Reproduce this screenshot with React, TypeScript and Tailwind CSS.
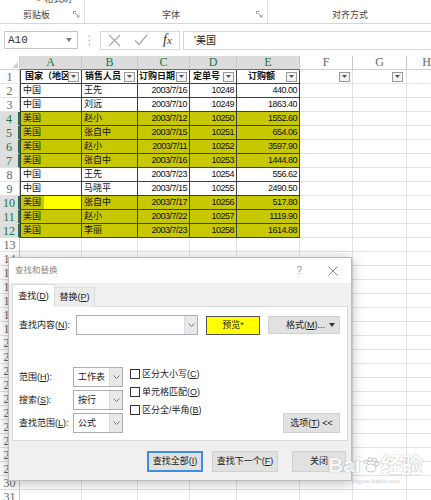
import React from 'react';

type Row = { country: string; person: string; date: string; id: string; amount: string; hl: boolean };

const ROWS: Row[] = [
  { country: '中国', person: '王先', date: '2003/7/16', id: '10248', amount: '440.00', hl: false },
  { country: '中国', person: '刘远', date: '2003/7/10', id: '10249', amount: '1863.40', hl: false },
  { country: '美国', person: '赵小', date: '2003/7/12', id: '10250', amount: '1552.60', hl: true },
  { country: '美国', person: '张自中', date: '2003/7/15', id: '10251', amount: '654.06', hl: true },
  { country: '美国', person: '赵小', date: '2003/7/11', id: '10252', amount: '3597.90', hl: true },
  { country: '美国', person: '张自中', date: '2003/7/16', id: '10253', amount: '1444.80', hl: true },
  { country: '中国', person: '王先', date: '2003/7/23', id: '10254', amount: '556.62', hl: false },
  { country: '中国', person: '马晓平', date: '2003/7/15', id: '10255', amount: '2490.50', hl: false },
  { country: '美国', person: '张自中', date: '2003/7/17', id: '10256', amount: '517.80', hl: true },
  { country: '美国', person: '赵小', date: '2003/7/22', id: '10257', amount: '1119.90', hl: true },
  { country: '美国', person: '李丽', date: '2003/7/23', id: '10258', amount: '1614.88', hl: true },
];

const COLS = [
  { key: 'A', w: 'w-[62px]', sel: true },
  { key: 'B', w: 'w-[56px]', sel: true },
  { key: 'C', w: 'w-[52px]', sel: true },
  { key: 'D', w: 'w-[47px]', sel: true },
  { key: 'E', w: 'w-[63px]', sel: true },
  { key: 'F', w: 'w-[53px]', sel: false },
  { key: 'G', w: 'w-[54px]', sel: false },
  { key: 'H', w: 'w-[40px]', sel: false },
];

const TABLE_CELL = 'shrink-0 overflow-hidden whitespace-nowrap border-r border-b border-[#3f3f3f]';
const PLAIN_CELL = 'shrink-0 border-r border-b border-[#e2e2e2]';

function Launcher() {
  return (
    <svg width="7" height="7" viewBox="0 0 7 7" className="mb-[2px]">
      <path d="M0.5 3V0.5H3" fill="none" stroke="#999" />
      <path d="M2 2L6 6M6 3.5V6H3.5" fill="none" stroke="#999" />
    </svg>
  );
}

function Ribbon() {
  return (
    <div className="flex h-[24px] border-b border-[#d6d6d6] text-[9px] leading-[10px] text-[#444]">
      <div className="flex w-[85px] shrink-0 flex-col border-r border-[#e1e1e1]">
        <div className="flex h-[4px] items-end overflow-hidden pl-[36px]">
          <span className="mr-[3px] text-[#d8a23a]">●</span>
          <span>格式刷</span>
        </div>
        <div className="flex flex-1 items-end pb-[3px] pl-[23px] pr-[4px]">
          <span>剪贴板</span>
          <span className="ml-auto"><Launcher /></span>
        </div>
      </div>
      <div className="flex w-[183px] shrink-0 items-end border-r border-[#e1e1e1] pb-[3px] pl-[77px] pr-[4px]">
        <span>字体</span>
        <span className="ml-auto"><Launcher /></span>
      </div>
      <div className="flex flex-1 items-end pb-[3px] pl-[64px]">
        <span>对齐方式</span>
      </div>
    </div>
  );
}

function FormulaBar() {
  return (
    <div className="flex h-[32px] items-center pl-[4px]">
      <div className="flex h-[18px] w-[74px] shrink-0 items-center border border-[#c6c6c6] pl-[3px] pr-[5px] font-['Liberation_Mono',monospace] text-[11px] text-[#333]">
        A10
        <svg className="ml-auto" width="6" height="4" viewBox="0 0 6 4">
          <path d="M0 0h6L3 4z" fill="#777" />
        </svg>
      </div>
      <div className="flex w-[22px] shrink-0 justify-center">
        <svg width="3" height="11" viewBox="0 0 3 11">
          <circle cx="1.5" cy="1.5" r="1" fill="#c4c4c4" />
          <circle cx="1.5" cy="5.5" r="1" fill="#c4c4c4" />
          <circle cx="1.5" cy="9.5" r="1" fill="#c4c4c4" />
        </svg>
      </div>
      <div className="flex h-[19px] w-[80px] shrink-0 items-center border border-[#d8d8d8] pl-[7px]">
        <svg width="13" height="13" viewBox="0 0 13 13">
          <path d="M1 1L12 12M12 1L1 12" stroke="#a8a8a8" strokeWidth="1.2" />
        </svg>
        <svg className="ml-[13px]" width="14" height="12" viewBox="0 0 14 12">
          <path d="M1 6.5L5 10.5L13 1" fill="none" stroke="#a8a8a8" strokeWidth="1.2" />
        </svg>
        <span className="ml-[15px] font-['Liberation_Serif',serif] text-[14px] italic leading-[14px] text-[#333]">
          f<span className="text-[11px]">x</span>
        </span>
      </div>
      <div className="ml-[3px] flex h-[19px] flex-1 items-center border border-r-0 border-[#d8d8d8] pl-[10px] text-[10px] text-[#222]">
        '美国
      </div>
    </div>
  );
}

function FilterBtn({ extra = '' }: { extra?: string }) {
  return (
    <span className={`ml-auto flex h-[10px] w-[11px] shrink-0 items-center justify-center border border-[#9a9a9a] bg-[#f2f2f2] ${extra}`}>
      <svg width="5" height="3" viewBox="0 0 5 3">
        <path d="M0 0h5L2.5 3z" fill="#555" />
      </svg>
    </span>
  );
}

function RowHead({ n, active }: { n: number; active: boolean }) {
  return (
    <div
      className={`w-[20px] shrink-0 border-b border-b-[#e2e2e2] text-center font-['Liberation_Serif',serif] text-[12px] leading-[14px] ${
        active ? 'border-r-2 border-r-[#217346] bg-[#dedede] text-[#217346]' : 'border-r border-r-[#c8c8c8] bg-white text-[#666]'
      }`}
    >
      {n}
    </div>
  );
}

function ColumnHeader() {
  return (
    <div className="flex h-[14px] font-['Liberation_Serif',serif] text-[12px] leading-[13px]">
      <div className="flex w-[20px] shrink-0 items-end justify-end border-r border-b border-[#d0d0d0] p-[1px]">
        <svg width="6" height="6" viewBox="0 0 6 6">
          <path d="M6 0V6H0z" fill="#cfcfcf" />
        </svg>
      </div>
      {COLS.map((c) => (
        <div
          key={c.key}
          className={`${c.w} shrink-0 border-r border-r-[#c8c8c8] border-b text-center ${
            c.sel ? 'border-b-[#6e6e6e] bg-[#dcdcdc] text-[#217346]' : 'border-b-[#d0d0d0] bg-white text-[#666]'
          }`}
        >
          {c.key}
        </div>
      ))}
    </div>
  );
}

function TitleRow() {
  const titles = ['国家（地区）', '销售人员', '订购日期', '定单号', '订购额'];
  return (
    <div className="flex h-[14px] text-[9px] leading-[13px] text-[#111]">
      <RowHead n={1} active={false} />
      {COLS.slice(0, 5).map((c, i) => (
        <div key={c.key} className={`${c.w} ${TABLE_CELL} flex items-center bg-white ${i === 0 ? 'border-l' : ''}`}>
          <span className={`min-w-0 flex-1 overflow-hidden font-bold ${i === 0 ? 'pl-[4px]' : 'text-center'}`}>{titles[i]}</span>
          <FilterBtn extra="mr-[2px]" />
        </div>
      ))}
      <div className={`w-[53px] ${PLAIN_CELL} flex items-center`}>
        <FilterBtn extra="mr-[2px]" />
      </div>
      <div className={`w-[54px] ${PLAIN_CELL} flex items-center`}>
        <FilterBtn extra="mr-[3px]" />
      </div>
      <div className={`w-[40px] ${PLAIN_CELL}`} />
    </div>
  );
}

function DataRow({ n, row }: { n: number; row: Row }) {
  const fill = row.hl ? 'bg-[#c8c800]' : 'bg-white';
  const num = "font-['Liberation_Sans',sans-serif] tracking-[-0.5px] text-right pr-[2px]";
  return (
    <div className="flex h-[14px] text-[9px] leading-[13px] text-[#111]">
      <RowHead n={n} active={row.hl} />
      {n === 10 ? (
        <div className={`w-[62px] ${TABLE_CELL} flex border-l bg-[#ffff00]`}>
          <span className="w-[23px] bg-[#c8c800] pl-[2px]">{row.country}</span>
        </div>
      ) : (
        <div className={`w-[62px] ${TABLE_CELL} border-l pl-[2px] ${fill}`}>{row.country}</div>
      )}
      <div className={`w-[56px] ${TABLE_CELL} pl-[2px] ${fill}`}>{row.person}</div>
      <div className={`w-[52px] ${TABLE_CELL} ${num} ${fill}`}>{row.date}</div>
      <div className={`w-[47px] ${TABLE_CELL} ${num} ${fill}`}>{row.id}</div>
      <div className={`w-[63px] ${TABLE_CELL} ${num} ${fill}`}>{row.amount}</div>
      <div className={`w-[53px] ${PLAIN_CELL}`} />
      <div className={`w-[54px] ${PLAIN_CELL}`} />
      <div className={`w-[40px] ${PLAIN_CELL}`} />
    </div>
  );
}

function EmptyRow({ n }: { n: number }) {
  return (
    <div className="flex h-[14px]">
      <RowHead n={n} active={false} />
      {COLS.map((c) => (
        <div key={c.key} className={`${c.w} ${PLAIN_CELL}`} />
      ))}
    </div>
  );
}

function Sheet() {
  const empties = Array.from({ length: 19 }, (_, i) => i + 13);
  return (
    <div className="flex flex-col">
      <ColumnHeader />
      <TitleRow />
      {ROWS.map((r, i) => (
        <DataRow key={i} n={i + 2} row={r} />
      ))}
      {empties.map((n) => (
        <EmptyRow key={n} n={n} />
      ))}
    </div>
  );
}

function Combo({ w, value }: { w: string; value?: string }) {
  return (
    <div className={`flex h-[20px] ${w} shrink-0 border border-[#abadb3] bg-white`}>
      <span className="flex-1 pl-[4px] leading-[18px]">{value}</span>
      <span className="flex w-[13px] items-center justify-center border-l border-[#d9d9d9] bg-[#e8e8e8]">
        <svg width="7" height="4" viewBox="0 0 7 4">
          <path d="M0.5 0.5L3.5 3.5L6.5 0.5" fill="none" stroke="#777" />
        </svg>
      </span>
    </div>
  );
}

function Check({ children }: { children: React.ReactNode }) {
  return (
    <div className="flex h-[18px] items-center gap-[2px]">
      <span className="h-[10px] w-[10px] border border-[#333] bg-white" />
      <span>{children}</span>
    </div>
  );
}

function FindDialog() {
  const options = [
    { label: <>范围(<u>H</u>):</>, value: '工作表' },
    { label: <>搜索(<u>S</u>):</>, value: '按行' },
    { label: <>查找范围(<u>L</u>):</>, value: '公式' },
  ];
  return (
    <div className="absolute left-[8px] top-[257px] flex h-[224px] w-[344px] flex-col border border-[#bdbdbd] bg-[#f0f0f0] text-[9px] leading-[11px] text-[#222] shadow-[0_2px_12px_rgba(0,0,0,0.28)]">
      <div className="flex h-[25px] shrink-0 items-center bg-white pl-[6px] pr-[13px]">
        <span className="text-[8.5px] text-[#8a8a8a]">查找和替换</span>
        <span className="ml-auto text-[10px] text-[#9a9a9a]">?</span>
        <svg className="ml-[26px]" width="10" height="10" viewBox="0 0 10 10">
          <path d="M0.5 0.5L9.5 9.5M9.5 0.5L0.5 9.5" stroke="#888" />
        </svg>
      </div>

      <div className="px-[3px]">
        <div className="flex h-[24px] items-end">
          <div className="relative z-10 flex h-[23px] w-[43px] items-center justify-center border border-b-0 border-[#d9d9d9] bg-white">
            查找(<u>D</u>)
          </div>
          <div className="flex h-[20px] w-[40px] items-center justify-center border-t border-r border-[#dcdcdc] bg-[#ececec]">
            替换(<u>P</u>)
          </div>
        </div>

        <div className="-mt-px flex h-[135px] flex-col border border-[#d9d9d9] bg-white pl-[6px] pt-[8px]">
          <div className="flex h-[20px] items-center">
            <span className="w-[57px] shrink-0">查找内容(<u>N</u>):</span>
            <Combo w="w-[122px]" />
            <div className="ml-[8px] flex h-[19px] w-[54px] items-center justify-center border border-[#555] bg-[#ffff00]">
              预览*
            </div>
            <div className="ml-[8px] flex h-[18px] w-[72px] items-center border border-[#d0d0d0] bg-[#e1e1e1] pl-[17px] pr-[4px]">
              格式(<u>M</u>)...
              <svg className="ml-auto" width="6" height="4" viewBox="0 0 6 4">
                <path d="M0 0h6L3 4z" fill="#333" />
              </svg>
            </div>
          </div>

          <div className="mt-[32px] flex">
            <div className="flex flex-col gap-[3px]">
              {options.map((o, i) => (
                <div key={i} className="flex h-[20px] items-center">
                  <span className="w-[54px] shrink-0">{o.label}</span>
                  <Combo w="w-[50px]" value={o.value} />
                </div>
              ))}
            </div>
            <div className="-mt-[2px] ml-[7px] flex flex-col">
              <Check>区分大小写(<u>C</u>)</Check>
              <Check>单元格匹配(<u>O</u>)</Check>
              <Check>区分全/半角(<u>B</u>)</Check>
            </div>
            <div className="ml-auto mr-[7px] flex h-[20px] w-[57px] items-center justify-center self-end border border-[#d0d0d0] bg-[#e1e1e1]">
              选项(<u>T</u>) &lt;&lt;
            </div>
          </div>
        </div>
      </div>

      <div className="mt-[10px] flex h-[21px] justify-end pr-[5px]">
        <div className="flex w-[56px] items-center justify-center border-2 border-[#3c8fd8] bg-[#e1e1e1]">
          查找全部(<u>I</u>)
        </div>
        <div className="ml-[9px] flex w-[66px] items-center justify-center border border-[#d0d0d0] bg-[#e1e1e1]">
          查找下一个(<u>F</u>)
        </div>
        <div className="ml-[14px] flex w-[54px] items-center justify-center border border-[#d0d0d0] bg-[#e1e1e1]">
          关闭
        </div>
      </div>
    </div>
  );
}

function Watermark() {
  return (
    <div className="pointer-events-none absolute left-[328px] top-[453px] flex flex-col items-center opacity-70">
      <div className="flex items-center text-[21px] font-bold leading-[24px] text-white [text-shadow:0_0_1px_#9a9a9a,0_0_1px_#9a9a9a]">
        Bai
        <svg className="mx-[1px]" width="18" height="18" viewBox="0 0 18 18">
          <ellipse cx="9" cy="12" rx="5" ry="4" fill="#fff" stroke="#aaa" />
          <circle cx="4" cy="6" r="2" fill="#fff" stroke="#aaa" />
          <circle cx="8" cy="3.5" r="2" fill="#fff" stroke="#aaa" />
          <circle cx="12.5" cy="4" r="2" fill="#fff" stroke="#aaa" />
          <circle cx="15" cy="8" r="2" fill="#fff" stroke="#aaa" />
        </svg>
        经验
      </div>
      <div className="text-[6px] leading-[8px] text-[#bbb]">jingyan.baidu.com</div>
    </div>
  );
}

export default function App() {
  return (
    <div className="relative h-[500px] w-[431px] overflow-hidden bg-white font-['Liberation_Sans','Noto_Sans_CJK_SC',sans-serif] text-[#222]">
      <Ribbon />
      <FormulaBar />
      <Sheet />
      <FindDialog />
      <Watermark />
    </div>
  );
}
